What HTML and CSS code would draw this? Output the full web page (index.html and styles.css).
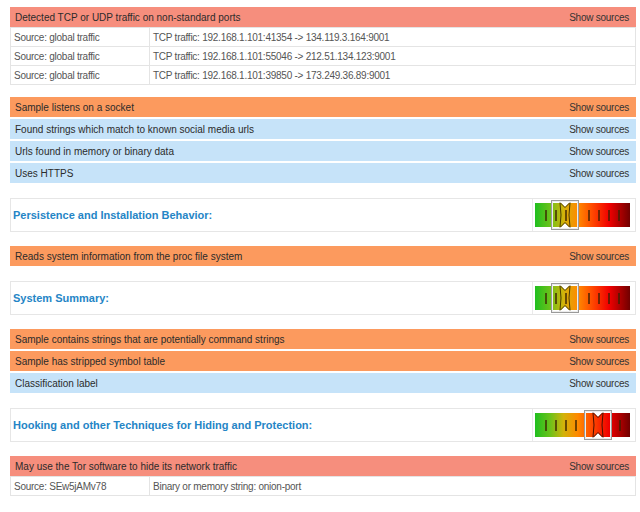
FILE: index.html
```html
<!DOCTYPE html>
<html lang="en">
<head>
  <meta charset="UTF-8" />
  <title>Behavior report</title>
  <link rel="stylesheet" href="styles.css">
</head>
<body>
  <div class="report">

    <div class="group with-table">
      <div class="sig sig-red"><span>Detected TCP or UDP traffic on non-standard ports</span><span class="src">Show sources</span></div>
      <table class="sources">
        <tr><td class="col-src">Source: global traffic</td><td>TCP traffic: 192.168.1.101:41354 -&gt; 134.119.3.164:9001</td></tr>
        <tr><td class="col-src">Source: global traffic</td><td>TCP traffic: 192.168.1.101:55046 -&gt; 212.51.134.123:9001</td></tr>
        <tr><td class="col-src">Source: global traffic</td><td>TCP traffic: 192.168.1.101:39850 -&gt; 173.249.36.89:9001</td></tr>
      </table>
    </div>

    <div class="group">
      <div class="sig sig-orange"><span>Sample listens on a socket</span><span class="src">Show sources</span></div>
      <div class="sig sig-blue"><span>Found strings which match to known social media urls</span><span class="src">Show sources</span></div>
      <div class="sig sig-blue"><span>Urls found in memory or binary data</span><span class="src">Show sources</span></div>
      <div class="sig sig-blue"><span>Uses HTTPS</span><span class="src">Show sources</span></div>
    </div>

    <div class="category">
      <div class="cat-title">Persistence and Installation Behavior:</div>
      <div class="cat-gauge">
        <svg width="98" height="30" viewBox="0 0 98 30">
          <defs>
            <linearGradient id="scale" x1="0" x2="1" y1="0" y2="0">
              <stop offset="0" stop-color="#1fbf1f"/>
              <stop offset="0.16" stop-color="#6cc21a"/>
              <stop offset="0.3" stop-color="#d2b30a"/>
              <stop offset="0.45" stop-color="#ff8a00"/>
              <stop offset="0.6" stop-color="#ff4a00"/>
              <stop offset="0.78" stop-color="#f00000"/>
              <stop offset="1" stop-color="#700000"/>
            </linearGradient>
          </defs>
          <rect x="1" y="3" width="95" height="24" fill="url(#scale)"/>
          <path d="M12 10v11M22 10v11M32 10v11M55 10v11M65 10v11M75 10v11M85 10v11" stroke="#3a2200" stroke-width="1.4"/>
          <g transform="translate(17 0)">
            <rect x="0.5" y="0.5" width="27" height="29" fill="none" stroke="#9a9a9a"/>
            <rect x="1.5" y="1.5" width="25" height="27" fill="none" stroke="#ececec"/>
            <path d="M9 2l5 5 5-5z M9 28l5-5 5 5z" fill="#fff"/>
            <path d="M9 2.5l5 5 5-5 M9 27.5l5-5 5 5 M9 3q2 12 0 24 M19 3q-2 12 0 24" fill="none" stroke="#4a3a00" stroke-width="1"/>
          </g>
        </svg>
      </div>
    </div>

    <div class="group">
      <div class="sig sig-orange"><span>Reads system information from the proc file system</span><span class="src">Show sources</span></div>
    </div>

    <div class="category">
      <div class="cat-title">System Summary:</div>
      <div class="cat-gauge">
        <svg width="98" height="30" viewBox="0 0 98 30">
          <rect x="1" y="3" width="95" height="24" fill="url(#scale)"/>
          <path d="M12 10v11M22 10v11M32 10v11M55 10v11M65 10v11M75 10v11M85 10v11" stroke="#3a2200" stroke-width="1.4"/>
          <g transform="translate(17 0)">
            <rect x="0.5" y="0.5" width="27" height="29" fill="none" stroke="#9a9a9a"/>
            <rect x="1.5" y="1.5" width="25" height="27" fill="none" stroke="#ececec"/>
            <path d="M9 2l5 5 5-5z M9 28l5-5 5 5z" fill="#fff"/>
            <path d="M9 2.5l5 5 5-5 M9 27.5l5-5 5 5 M9 3q2 12 0 24 M19 3q-2 12 0 24" fill="none" stroke="#4a3a00" stroke-width="1"/>
          </g>
        </svg>
      </div>
    </div>

    <div class="group">
      <div class="sig sig-orange"><span>Sample contains strings that are potentially command strings</span><span class="src">Show sources</span></div>
      <div class="sig sig-orange"><span>Sample has stripped symbol table</span><span class="src">Show sources</span></div>
      <div class="sig sig-blue"><span>Classification label</span><span class="src">Show sources</span></div>
    </div>

    <div class="category">
      <div class="cat-title">Hooking and other Techniques for Hiding and Protection:</div>
      <div class="cat-gauge">
        <svg width="98" height="30" viewBox="0 0 98 30">
          <rect x="1" y="3" width="95" height="24" fill="url(#scale)"/>
          <path d="M12 10v11M22 10v11M32 10v11M42 10v11M86 10v11" stroke="#3a2200" stroke-width="1.4"/>
          <g transform="translate(50 0)">
            <rect x="0.5" y="0.5" width="27" height="29" fill="none" stroke="#9a9a9a"/>
            <rect x="1.5" y="1.5" width="25" height="27" fill="none" stroke="#ececec"/>
            <path d="M9 2l5 5 5-5z M9 28l5-5 5 5z" fill="#fff"/>
            <path d="M9 2.5l5 5 5-5 M9 27.5l5-5 5 5 M9 3q2 12 0 24 M19 3q-2 12 0 24" fill="none" stroke="#4a1000" stroke-width="1"/>
          </g>
        </svg>
      </div>
    </div>

    <div class="group with-table">
      <div class="sig sig-red"><span>May use the Tor software to hide its network traffic</span><span class="src">Show sources</span></div>
      <table class="sources">
        <tr><td class="col-src">Source: SEw5jAMv78</td><td>Binary or memory string: onion-port</td></tr>
      </table>
    </div>

  </div>
</body>
</html>
```

FILE: styles.css
```css
body {
  margin: 0;
  background-color: #fff;
  font-family: 'Liberation Sans', Arial, sans-serif;
  font-size: 10px;
  color: #333;
}

.report {
  padding: 7px 4px 0 10px;
}

.group {
  display: flex;
  flex-direction: column;
  gap: 2px;
  margin-bottom: 15px;
}

.group.with-table {
  margin-bottom: 12px;
}

.sig {
  display: flex;
  justify-content: space-between;
  align-items: center;
  height: 20px;
  padding: 0 7px 0 5px;
  color: #2b2b2b;
}

.sig .src {
  letter-spacing: -0.25px;
  color: #333;
}

.sig-red {
  background-color: #f68e7d;
}

.sig-orange {
  background-color: #fc9a5e;
}

.sig-blue {
  background-color: #c6e3f9;
}

.sources {
  width: 100%;
  margin-top: -2px;
  border-collapse: collapse;
  letter-spacing: -0.25px;
  color: #555;
}

.sources td {
  height: 18px;
  padding: 0 4px 0 3px;
  border: 1px solid #e4e4e4;
}

.sources .col-src {
  width: 131px;
}

.category {
  display: flex;
  align-items: stretch;
  height: 32px;
  margin-bottom: 14px;
  border: 1px solid #e6e6e6;
}

.cat-title {
  flex: 1;
  display: flex;
  align-items: center;
  padding-left: 2px;
  font-size: 11px;
  font-weight: bold;
  color: #2585c6;
}

.cat-gauge {
  display: flex;
  align-items: center;
  width: 101px;
  padding-left: 1px;
  border-left: 1px solid #eaeaea;
}
```
